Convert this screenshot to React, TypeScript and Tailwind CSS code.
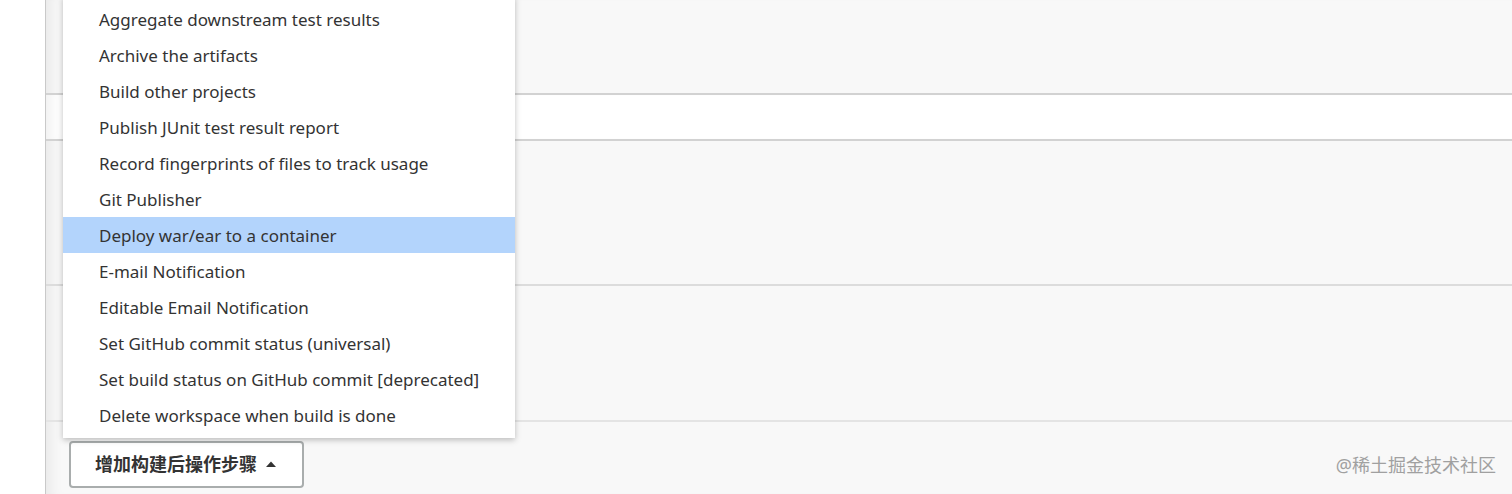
import React from "react";

const menuItems = [
  "Aggregate downstream test results",
  "Archive the artifacts",
  "Build other projects",
  "Publish JUnit test result report",
  "Record fingerprints of files to track usage",
  "Git Publisher",
  "Deploy war/ear to a container",
  "E-mail Notification",
  "Editable Email Notification",
  "Set GitHub commit status (universal)",
  "Set build status on GitHub commit [deprecated]",
  "Delete workspace when build is done",
];

const font = { fontFamily: '"Noto Sans", "Noto Sans CJK SC", sans-serif' };

export default function App() {
  return (
    <div className="flex h-[494px] w-full overflow-hidden bg-white" style={font}>
      <div className="w-[45px] shrink-0 bg-white" />
      <main className="relative flex flex-1 flex-col border-l border-[#c9c9c9] bg-[#f8f8f8] shadow-[inset_14px_0_14px_-10px_rgba(0,0,0,0.07)]">
        <div className="h-[95px] shrink-0 border-b-2 border-[#d2d2d2]" />
        <div className="h-[46px] shrink-0 border-b-2 border-[#d2d2d2] bg-white shadow-[inset_14px_0_14px_-10px_rgba(0,0,0,0.07)]" />
        <div className="h-[145px] shrink-0 border-b-2 border-[#dcdcdc]" />
        <div className="h-[136px] shrink-0 border-b-2 border-[#e4e4e4]" />
        <div className="flex-1 pl-[23px] pt-[19px]">
          <button className="flex h-[47px] w-[235px] items-center rounded-[4px] border-2 border-[#a9adad] bg-white pl-[24px] text-[18px] font-bold text-[#333]">
            增加构建后操作步骤
            <svg width="12" height="8" viewBox="0 0 12 8" className="ml-[8px] mt-[-2px]">
              <path d="M1 7 L6 1.5 L11 7 Z" fill="#333" />
            </svg>
          </button>
        </div>

        <ul className="absolute left-[17px] top-[-4px] w-[452px] bg-white pb-[5px] pt-[5px] shadow-[0_2px_6px_rgba(0,0,0,0.25)]">
          {menuItems.map((item) => (
            <li
              key={item}
              className={
                item === "Deploy war/ear to a container"
                  ? "flex h-[36px] items-center bg-[#b3d4fc] pl-[36px] pt-[2px] text-[17px] text-[#333]"
                  : "flex h-[36px] items-center pl-[36px] pt-[2px] text-[17px] text-[#333]"
              }
            >
              {item}
            </li>
          ))}
        </ul>

        <div className="absolute bottom-[15px] right-[16px] text-[18px] text-[#a0a0a0]">@稀土掘金技术社区</div>
      </main>
    </div>
  );
}
